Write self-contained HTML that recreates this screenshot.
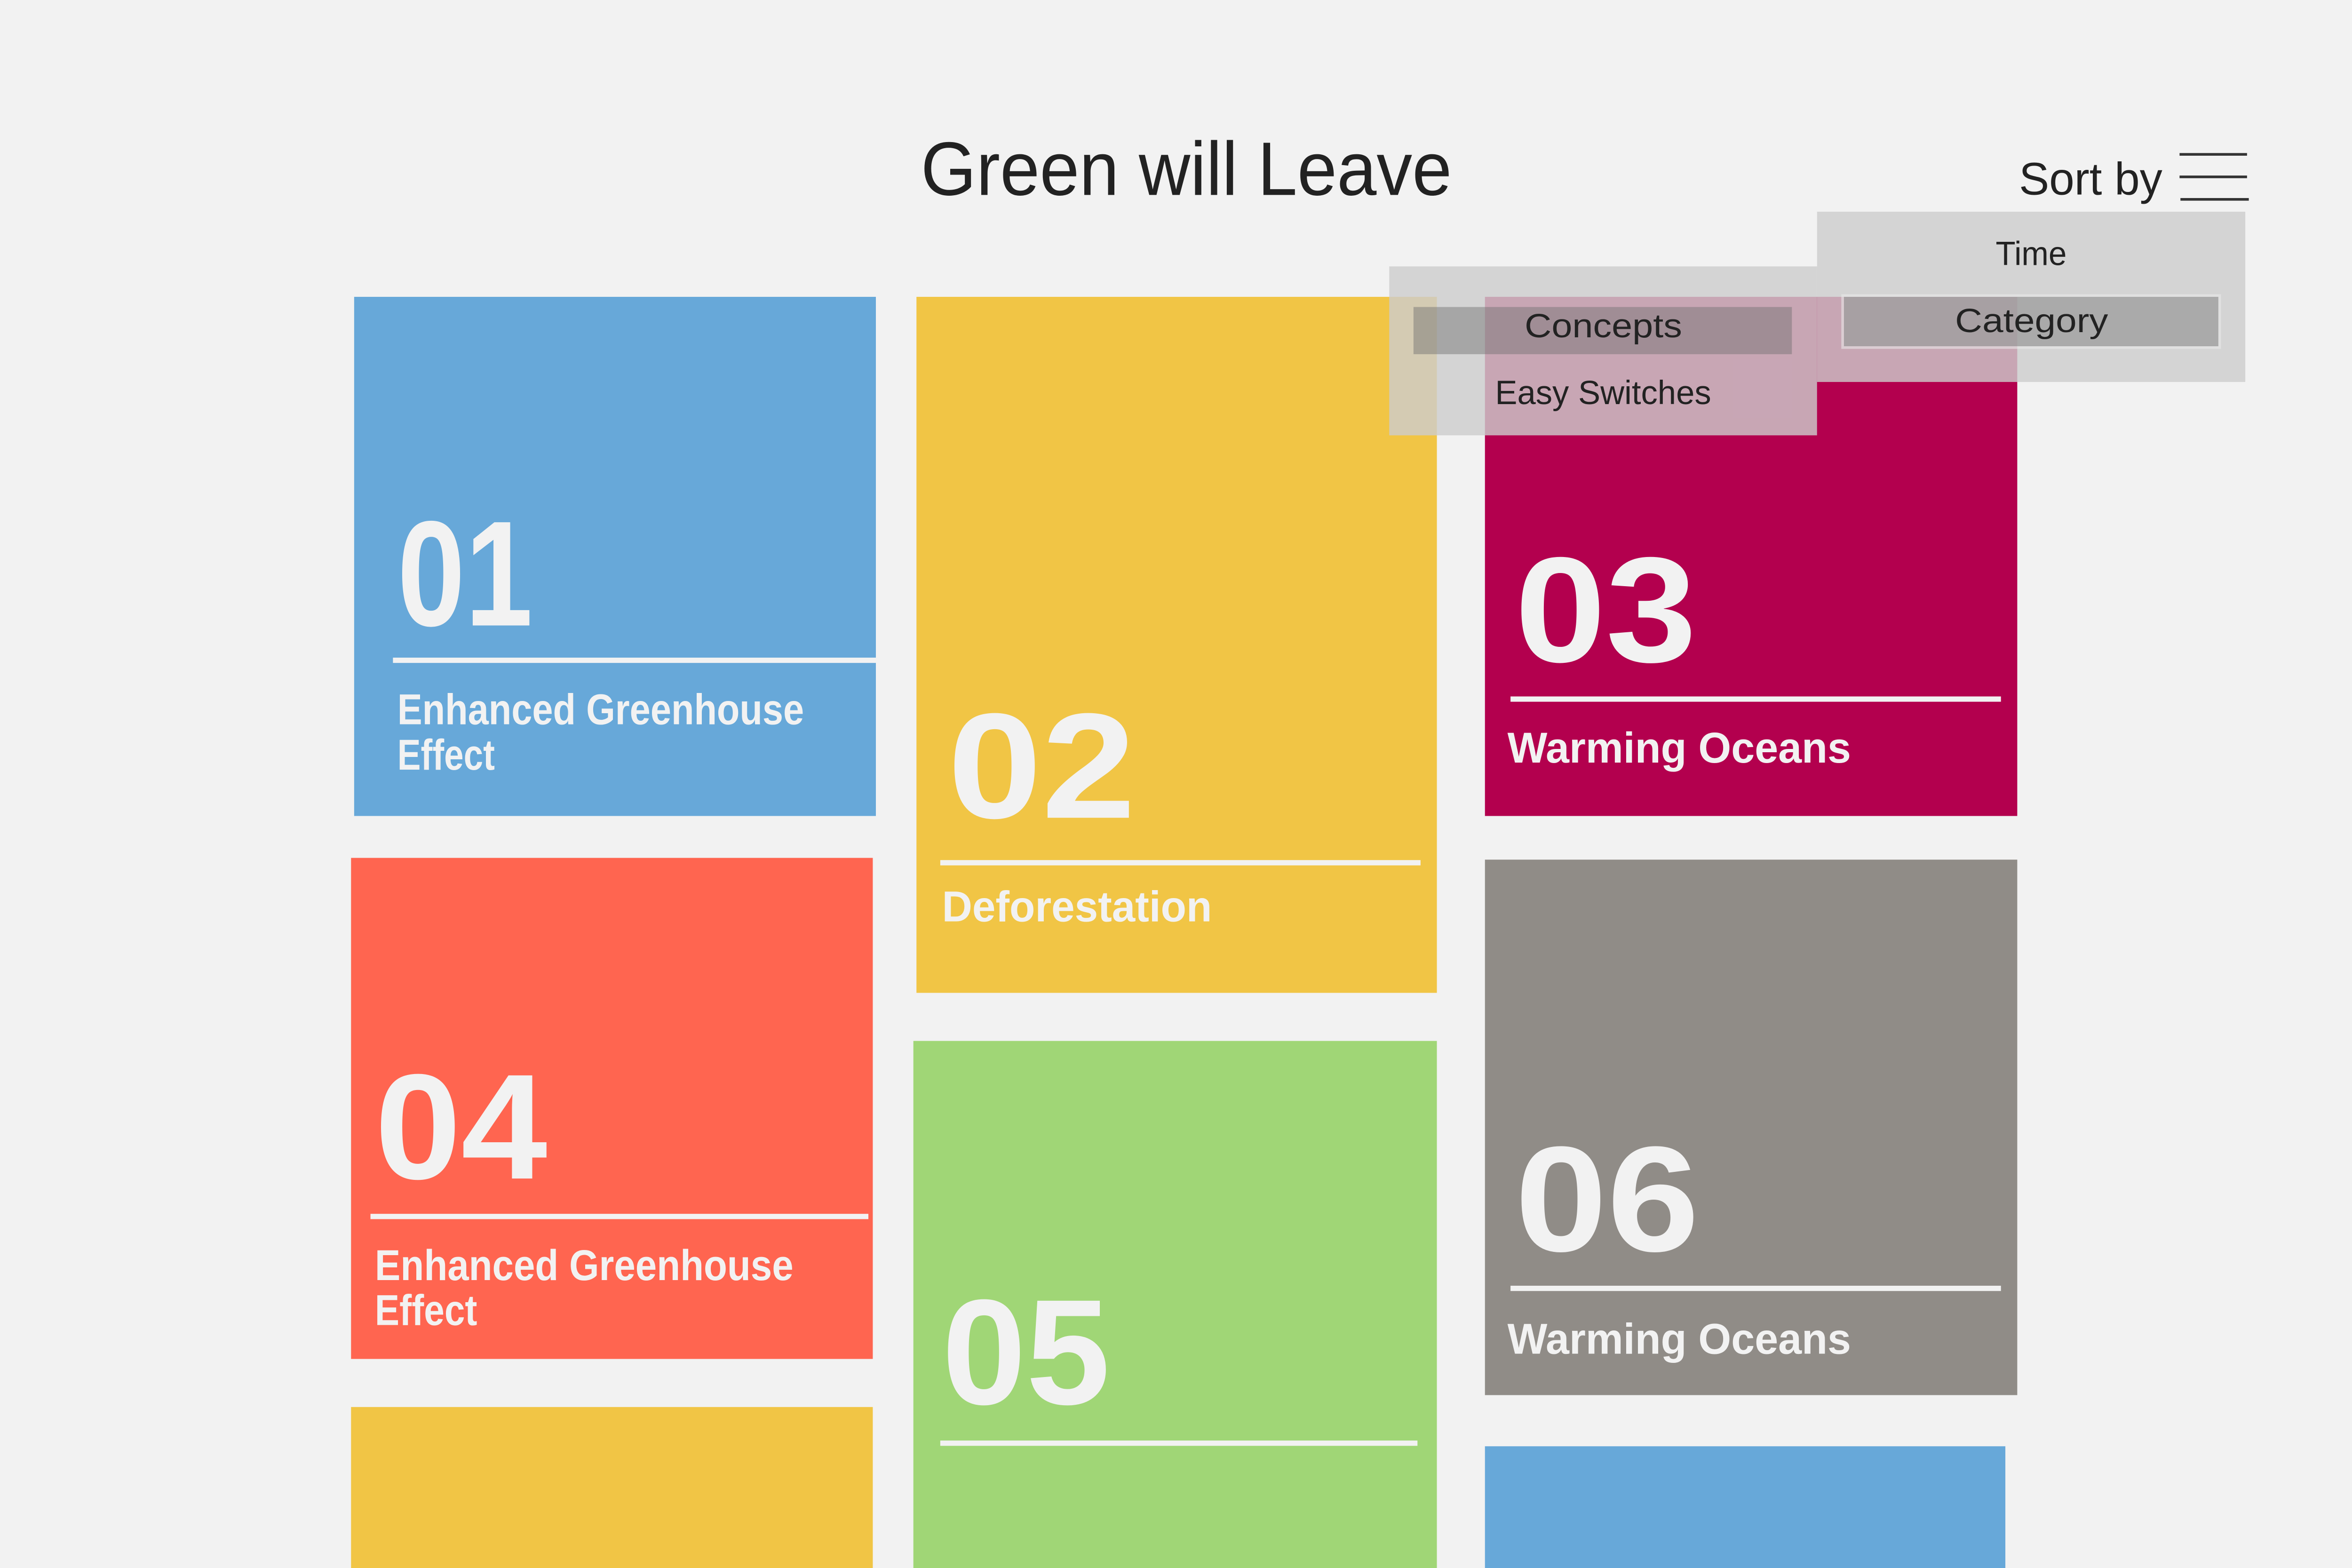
<!DOCTYPE html>
<html><head><meta charset="utf-8"><style>
html,body{margin:0;padding:0;background:#f2f2f2;overflow:hidden;}
svg{display:block;width:100vw;height:auto;overflow:visible;}
</style></head><body>
<svg viewBox="0 0 5333 3333" xmlns="http://www.w3.org/2000/svg" font-family="'Liberation Sans', sans-serif">
<rect width="5333" height="3700" fill="#f2f2f2"/>
<text x="2088" y="442" font-size="172" fill="#222" textLength="1204" lengthAdjust="spacingAndGlyphs">Green will Leave</text>
<text x="4578" y="441" font-size="104" fill="#222" textLength="325" lengthAdjust="spacingAndGlyphs">Sort by</text>
<rect x="4942" y="347" width="153" height="6" fill="#333"/>
<rect x="4942" y="398" width="153" height="6" fill="#333"/>
<rect x="4944" y="449" width="155" height="6" fill="#333"/>

<g fill="#f2f2f2" font-weight="bold">
<rect x="803" y="673" width="1183" height="1177" fill="#67a8d9"/>
<text x="901" y="1418" font-size="340" textLength="307" lengthAdjust="spacingAndGlyphs">01</text>
<rect x="891" y="1491" width="1095" height="12"/>
<text x="901" y="1642" font-size="98" textLength="922" lengthAdjust="spacingAndGlyphs">Enhanced Greenhouse</text>
<text x="901" y="1745" font-size="98" textLength="221" lengthAdjust="spacingAndGlyphs">Effect</text>

<rect x="2078" y="673" width="1180" height="1578" fill="#f1c545"/>
<text x="2149" y="1854" font-size="340" textLength="426" lengthAdjust="spacingAndGlyphs">02</text>
<rect x="2132" y="1950" width="1089" height="12"/>
<text x="2136" y="2089" font-size="98" textLength="612" lengthAdjust="spacingAndGlyphs">Deforestation</text>

<rect x="3367" y="673" width="1207" height="1177" fill="#b3004e"/>
<text x="3435" y="1500" font-size="340" textLength="412" lengthAdjust="spacingAndGlyphs">03</text>
<rect x="3425" y="1579" width="1112" height="12"/>
<text x="3418" y="1729" font-size="98" textLength="779" lengthAdjust="spacingAndGlyphs">Warming Oceans</text>

<rect x="796" y="1945" width="1183" height="1136" fill="#ff6550"/>
<text x="850" y="2672" font-size="340" textLength="391" lengthAdjust="spacingAndGlyphs">04</text>
<rect x="840" y="2752" width="1129" height="12"/>
<text x="850" y="2902" font-size="98" textLength="949" lengthAdjust="spacingAndGlyphs">Enhanced Greenhouse</text>
<text x="850" y="3004" font-size="98" textLength="232" lengthAdjust="spacingAndGlyphs">Effect</text>

<rect x="2071" y="2360" width="1187" height="1300" fill="#a0d676"/>
<text x="2136" y="3183" font-size="340" textLength="381" lengthAdjust="spacingAndGlyphs">05</text>
<rect x="2132" y="3266" width="1082" height="12"/>

<rect x="3367" y="1949" width="1207" height="1214" fill="#908c87"/>
<text x="3435" y="2836" font-size="340" textLength="418" lengthAdjust="spacingAndGlyphs">06</text>
<rect x="3425" y="2915" width="1112" height="12"/>
<text x="3418" y="3069" font-size="98" textLength="779" lengthAdjust="spacingAndGlyphs">Warming Oceans</text>

<rect x="796" y="3190" width="1183" height="500" fill="#f1c545"/>
<rect x="3367" y="3279" width="1180" height="420" fill="#67a8d9"/>
</g>

<rect x="3150" y="604" width="970" height="383" fill="rgb(205,205,205)" fill-opacity="0.81"/>
<rect x="4120" y="480" width="971" height="386" fill="rgb(205,205,205)" fill-opacity="0.81"/>
<rect x="3205" y="696" width="858" height="107" fill="rgb(110,110,110)" fill-opacity="0.45"/>
<rect x="4175" y="667" width="861" height="124" fill="#e8e8e8" fill-opacity="0.6"/>
<rect x="4181" y="673" width="849" height="112" fill="rgb(110,110,110)" fill-opacity="0.48"/>
<g fill="#222" font-size="76">
<text x="4525" y="601" textLength="161" lengthAdjust="spacingAndGlyphs">Time</text>
<text x="4433" y="753" textLength="347" lengthAdjust="spacingAndGlyphs">Category</text>
<text x="3457" y="765" textLength="357" lengthAdjust="spacingAndGlyphs">Concepts</text>
<text x="3390" y="916" textLength="490" lengthAdjust="spacingAndGlyphs">Easy Switches</text>
</g>
</svg>
</body></html>
